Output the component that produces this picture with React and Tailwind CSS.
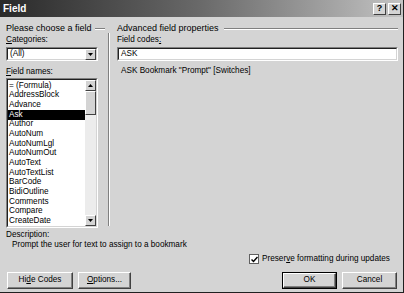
import React from 'react';

const items = [
    '= (Formula)', 'AddressBlock', 'Advance', 'Ask', 'Author', 'AutoNum', 'AutoNumLgl',
    'AutoNumOut', 'AutoText', 'AutoTextList', 'BarCode', 'BidiOutline', 'Comments',
    'Compare', 'CreateDate',
];

const Btn = ({ children, className = '', isDefault = false }) => (
    <div className={`h-[17px] flex items-center justify-center bg-[#d4d4d4] ${isDefault ? 'border border-black' : ''} ${className}`}>
        <div className="w-full h-full flex items-center justify-center border-t border-l border-white border-r border-b border-r-[#404040] border-b-[#404040] shadow-[inset_-1px_-1px_0_#808080]">
            {children}
        </div>
    </div>
);

const Sunken = ({ className = '', children }) => (
    <div className={`border-t border-l border-[#808080] border-r border-b border-r-white border-b-white ${className}`}>
        <div className="w-full h-full border-t border-l border-[#202020] border-r border-b border-r-[#d4d4d4] border-b-[#d4d4d4] bg-white">
            {children}
        </div>
    </div>
);

const ArrowBtn = ({ down = true, className = '' }) => (
    <div className={`w-[11px] h-[11px] bg-[#d4d4d4] border-t border-l border-white border-r border-b border-r-[#404040] border-b-[#404040] flex items-center justify-center ${className}`}>
        <svg width="5" height="3" viewBox="0 0 5 3">
            {down ? <path d="M0 0h5L2.5 3z" fill="#000" /> : <path d="M0 3h5L2.5 0z" fill="#000" />}
        </svg>
    </div>
);

export default function App() {
    return (
        <div className="w-[404px] h-[293px] bg-[#d4d4d4] flex flex-col text-[8.2px] leading-none text-black border-r border-b border-[#202020]" style={{ fontFamily: '"Liberation Sans", Arial, sans-serif' }}>
            {/* title bar */}
            <div className="h-[17px] flex items-center justify-between bg-gradient-to-r from-[#2a2a2a] via-[#6a6a6a] to-[#c4c4c4] pl-[3px] pr-[2px]">
                <span className="text-white font-bold text-[10px]">Field</span>
                <div className="flex gap-[2px]">
                    <div className="w-[13px] h-[12px] bg-[#d4d4d4] border-t border-l border-white border-r border-b border-r-[#404040] border-b-[#404040] flex items-center justify-center font-bold text-[9px]">?</div>
                    <div className="w-[13px] h-[12px] bg-[#d4d4d4] border-t border-l border-white border-r border-b border-r-[#404040] border-b-[#404040] flex items-center justify-center font-bold text-[9px]">✕</div>
                </div>
            </div>

            <div className="flex pt-[6px]">
                {/* left */}
                <div className="w-[108px] pl-[6px] flex flex-col">
                    <div className="flex items-center h-[11px] text-[9px]">
                        <span>Please choose a field</span>
                        <div className="flex-1 ml-[3px] mr-[3px] h-[2px] border-t border-[#808080] border-b border-b-white" />
                    </div>
                    <div className="mt-[1px] h-[10px] flex items-center"><span><u>C</u>ategories:</span></div>
                    <Sunken className="mt-[2px] w-[92px] h-[14px]">
                        <div className="flex items-center justify-between h-full pl-[2px]">
                            <span>(All)</span>
                            <ArrowBtn className="h-[10px]" />
                        </div>
                    </Sunken>
                    <div className="mt-[6px] h-[11px] flex items-center"><span><u>F</u>ield names:</span></div>
                    <Sunken className="w-[92px] h-[150px]">
                        <div className="flex h-full">
                            <div className="flex-1 flex flex-col pt-[1px]">
                                {items.map(it => (
                                    <div key={it} className={`h-[9.7px] flex items-center pl-[1px] ${it === 'Ask' ? 'bg-black text-white' : ''}`}>{it}</div>
                                ))}
                            </div>
                            <div className="w-[11px] flex flex-col bg-[#ececec]">
                                <ArrowBtn down={false} />
                                <div className="h-[24px] bg-[#d4d4d4] border-t border-l border-white border-r border-b border-r-[#404040] border-b-[#404040]" />
                                <div className="flex-1" />
                                <ArrowBtn />
                            </div>
                        </div>
                    </Sunken>
                </div>

                {/* separator */}
                <div className="w-[2px] mt-[10px] h-[193px] border-l border-[#808080] border-r border-r-white" />

                {/* right */}
                <div className="flex-1 pl-[7px] pr-[5px] flex flex-col">
                    <div className="flex items-center h-[11px] text-[9px]">
                        <span>Advanced field properties</span>
                        <div className="flex-1 ml-[5px] h-[2px] border-t border-[#808080] border-b border-b-white" />
                    </div>
                    <div className="mt-[1px] h-[10px] flex items-center"><span>Field codes<u>:</u></span></div>
                    <Sunken className="mt-[2px] h-[14px]">
                        <div className="flex items-center h-full pl-[2px]">ASK</div>
                    </Sunken>
                    <div className="mt-[6px] pl-[4px]">ASK Bookmark "Prompt" [Switches]</div>
                </div>
            </div>

            <div className="px-[6px] mt-[2px] h-[10px] flex items-center">Description:</div>
            <div className="px-[12px] h-[10px] flex items-center">Prompt the user for text to assign to a bookmark</div>

            <div className="flex items-center mt-[4px] pl-[249px]">
                <div className="w-[10px] h-[10px] bg-white border border-[#606060] flex items-center justify-center">
                    <svg width="7" height="7" viewBox="0 0 7 7"><path d="M0.5 3.5L2.5 5.5L6.5 1" stroke="#000" strokeWidth="1.5" fill="none" /></svg>
                </div>
                <span className="ml-[3px]">Preser<u>v</u>e formatting during updates</span>
            </div>

            <div className="flex items-center mt-[8px] pl-[7px] pr-[6px]">
                <Btn className="w-[66px]">Hi<u>d</u>e Codes</Btn>
                <Btn className="w-[53px] ml-[5px]"><u>O</u>ptions...</Btn>
                <div className="flex-1" />
                <Btn className="w-[55px]" isDefault>OK</Btn>
                <Btn className="w-[55px] ml-[5px]">Cancel</Btn>
            </div>
        </div>
    );
}
